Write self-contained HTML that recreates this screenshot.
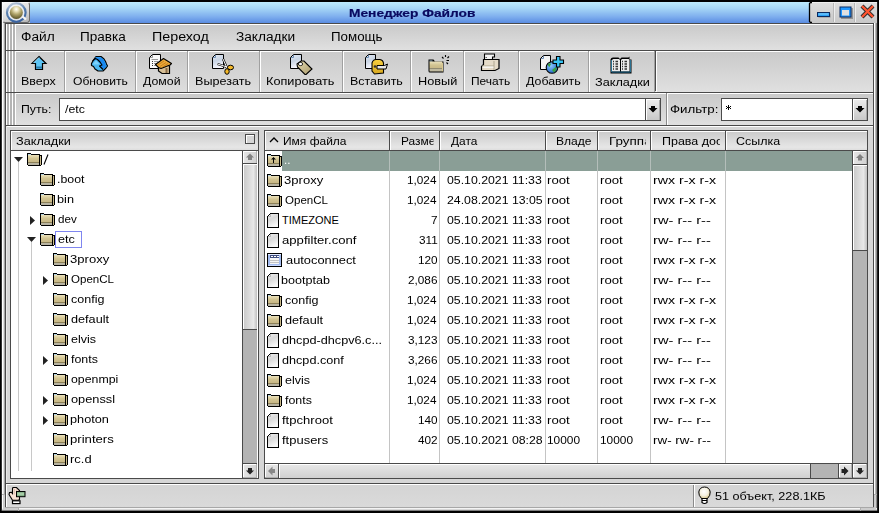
<!DOCTYPE html>
<html><head><meta charset="utf-8"><style>
html,body{margin:0;padding:0;}
body{width:879px;height:513px;overflow:hidden;background:#000;position:relative;font-family:'Liberation Sans', sans-serif;}
div{position:absolute;box-sizing:border-box;}
svg{position:absolute;}
</style></head><body>
<div style="left:2px;top:2px;width:875px;height:509px;background:#d6d6d6;"></div><div style="left:1px;top:2px;width:1px;height:509px;background:#303030;"></div><div style="left:2px;top:2px;width:1px;height:509px;background:#ffffff;"></div><div style="left:3px;top:23px;width:1px;height:488px;background:#e0e0e0;"></div><div style="left:4px;top:23px;width:1px;height:488px;background:#a4a4a4;"></div><div style="left:874px;top:23px;width:1px;height:488px;background:#ffffff;"></div><div style="left:875px;top:23px;width:1px;height:488px;background:#b8b8b8;"></div><div style="left:876px;top:2px;width:1px;height:509px;background:#8a8a8a;"></div><div style="left:877px;top:2px;width:1px;height:509px;background:#202020;"></div><div style="left:2px;top:508px;width:875px;height:1px;background:#f4f4f4;"></div><div style="left:2px;top:509px;width:875px;height:1px;background:#d8d8d8;"></div><div style="left:2px;top:510px;width:875px;height:1px;background:#808080;"></div><div style="left:874px;top:495px;width:2px;height:15px;background:#cdcdcd;"></div><div style="left:861px;top:508px;width:15px;height:2px;background:#cdcdcd;"></div><div style="left:860px;top:508px;width:1px;height:3px;background:#b0b0b0;"></div><div style="left:874px;top:494px;width:3px;height:1px;background:#b0b0b0;"></div><div style="left:3px;top:495px;width:2px;height:15px;background:#cdcdcd;"></div><div style="left:3px;top:508px;width:15px;height:2px;background:#cdcdcd;"></div><div style="left:18px;top:508px;width:1px;height:3px;background:#b0b0b0;"></div><div style="left:2px;top:494px;width:3px;height:1px;background:#b0b0b0;"></div><div style="left:30px;top:2px;width:780px;height:21px;background:linear-gradient(#bdeafc,#a6d6f6 30%,#7eaeee 70%,#5b8de2);"></div><div style="left:2px;top:2px;width:28px;height:21px;background:linear-gradient(160deg,#f6f6f6,#dcdcdc 55%,#b4b4b4);border-radius:3px;border-top:1px solid #fafafa;border-left:1px solid #fafafa;border-right:1px solid #6a6a6a;border-bottom:1px solid #6a6a6a"></div><svg style="position:absolute;left:2px;top:2px" width="28" height="21" viewBox="0 0 28 21"><defs><radialGradient id="gs" cx="0.5" cy="0.25" r="0.8"><stop offset="0" stop-color="#ffffff"/><stop offset="0.22" stop-color="#e8e0b8"/><stop offset="0.5" stop-color="#b0a46a"/><stop offset="0.85" stop-color="#6a6232"/><stop offset="1" stop-color="#4a4420"/></radialGradient>
<linearGradient id="rg" x1="0" y1="0" x2="0.3" y2="1"><stop offset="0" stop-color="#6c8cb8" stop-opacity="0.35"/><stop offset="0.5" stop-color="#4a74a8" stop-opacity="0.9"/><stop offset="1" stop-color="#3a64a0" stop-opacity="1"/></linearGradient>
<filter id="bl"><feGaussianBlur stdDeviation="0.7"/></filter></defs>
<circle cx="14.3" cy="10.5" r="9" fill="none" stroke="url(#rg)" stroke-width="2.8" filter="url(#bl)"/>
<circle cx="14.3" cy="10.5" r="7.6" fill="none" stroke="#fff" stroke-width="1.4" opacity="0.8" filter="url(#bl)"/>
<path d="M20.5 14.5 L24 17.5" stroke="#f4f4f4" stroke-width="2.2" filter="url(#bl)"/>
<circle cx="14.3" cy="10.5" r="6.5" fill="url(#gs)"/></svg><div style="left:810px;top:2px;width:67px;height:21px;background:linear-gradient(#dedede,#c8c8c8);"></div><div style="left:834px;top:3px;width:1px;height:19px;background:#eeeeee;"></div><div style="left:833px;top:3px;width:1px;height:19px;background:#b8b8b8;"></div><div style="left:855px;top:3px;width:1px;height:19px;background:#eeeeee;"></div><div style="left:854px;top:3px;width:1px;height:19px;background:#b8b8b8;"></div><div style="left:810px;top:2px;width:67px;height:1px;background:#eeeeee;"></div><svg style="position:absolute;left:806px;top:2px" width="8" height="21" viewBox="0 0 8 21"><path d="M6 0.5 H4.5 L3.5 1.5 V19.5 L4.5 20.5 H6" fill="none" stroke="#000" stroke-width="1.3"/></svg><svg style="position:absolute;left:816px;top:11px" width="17" height="9" viewBox="0 0 17 9"><rect x="2.5" y="2.5" width="12" height="4" fill="#111" opacity="0.35"/><rect x="1.5" y="1.5" width="12" height="4" fill="#2aa0f4" stroke="#0a2a60" stroke-width="1"/><rect x="2.5" y="2.5" width="10" height="1" fill="#8ad4ff"/></svg><svg style="position:absolute;left:838px;top:4px" width="17" height="17" viewBox="0 0 17 17"><rect x="3" y="4" width="12" height="11" fill="#222" opacity="0.35"/><rect x="1.5" y="2.5" width="12" height="11" fill="#0a2a60"/><rect x="2.5" y="3.5" width="10" height="9" fill="#1e96ff"/><rect x="4" y="6" width="7" height="5.5" fill="#e0e0e0"/></svg><svg style="position:absolute;left:859px;top:3px" width="17" height="17" viewBox="0 0 17 17"><path d="M3 3 L14 14 M14 3 L3 14" stroke="#000" stroke-width="4.2" opacity="0.8"/><path d="M3 3 L14 14 M14 3 L3 14" stroke="#ff5530" stroke-width="2.4"/></svg><div style="left:5px;top:23px;width:869px;height:1px;background:#4a4a4a;"></div><div style="left:6px;top:24px;width:867px;height:26px;background:linear-gradient(#c9c9c9,#e0e0e0);"></div><div style="left:6px;top:24px;width:867px;height:1px;background:#ffffff;"></div><div style="left:5px;top:23px;width:1px;height:27px;background:#4a4a4a;"></div><div style="left:873px;top:23px;width:1px;height:27px;background:#4a4a4a;"></div><div style="left:6px;top:24px;width:1px;height:26px;background:#ffffff;"></div><div style="left:7px;top:24px;width:2px;height:26px;background:#b4b4b4;"></div><div style="left:9px;top:24px;width:1px;height:26px;background:#ffffff;"></div><div style="left:10px;top:24px;width:2px;height:26px;background:#b4b4b4;"></div><div style="left:12px;top:24px;width:1px;height:26px;background:#ffffff;"></div><div style="left:13px;top:24px;width:2px;height:26px;background:#b4b4b4;"></div><div style="left:15px;top:24px;width:1px;height:26px;background:#ffffff;"></div><div style="left:5px;top:50px;width:869px;height:1px;background:#4a4a4a;"></div><div style="left:6px;top:51px;width:867px;height:41px;background:linear-gradient(#c9c9c9,#e0e0e0);"></div><div style="left:6px;top:51px;width:867px;height:1px;background:#ffffff;"></div><div style="left:5px;top:50px;width:1px;height:42px;background:#4a4a4a;"></div><div style="left:873px;top:50px;width:1px;height:42px;background:#4a4a4a;"></div><div style="left:6px;top:51px;width:1px;height:41px;background:#ffffff;"></div><div style="left:7px;top:51px;width:2px;height:41px;background:#b4b4b4;"></div><div style="left:9px;top:51px;width:1px;height:41px;background:#ffffff;"></div><div style="left:10px;top:51px;width:2px;height:41px;background:#b4b4b4;"></div><div style="left:12px;top:51px;width:1px;height:41px;background:#ffffff;"></div><div style="left:13px;top:51px;width:2px;height:41px;background:#b4b4b4;"></div><div style="left:15px;top:51px;width:1px;height:41px;background:#ffffff;"></div><div style="left:15px;top:52px;width:50px;height:40px;background:linear-gradient(#cbcbcb,#dddddd);"></div><div style="left:15px;top:52px;width:1px;height:40px;background:#ffffff;"></div><div style="left:64px;top:51px;width:1px;height:41px;background:#a0a0a0;"></div><div style="left:65px;top:52px;width:71px;height:40px;background:linear-gradient(#cbcbcb,#dddddd);"></div><div style="left:65px;top:52px;width:1px;height:40px;background:#ffffff;"></div><div style="left:135px;top:51px;width:1px;height:41px;background:#a0a0a0;"></div><div style="left:136px;top:52px;width:52px;height:40px;background:linear-gradient(#cbcbcb,#dddddd);"></div><div style="left:136px;top:52px;width:1px;height:40px;background:#ffffff;"></div><div style="left:187px;top:51px;width:1px;height:41px;background:#a0a0a0;"></div><div style="left:188px;top:52px;width:72px;height:40px;background:linear-gradient(#cbcbcb,#dddddd);"></div><div style="left:188px;top:52px;width:1px;height:40px;background:#ffffff;"></div><div style="left:259px;top:51px;width:1px;height:41px;background:#a0a0a0;"></div><div style="left:260px;top:52px;width:83px;height:40px;background:linear-gradient(#cbcbcb,#dddddd);"></div><div style="left:260px;top:52px;width:1px;height:40px;background:#ffffff;"></div><div style="left:342px;top:51px;width:1px;height:41px;background:#a0a0a0;"></div><div style="left:343px;top:52px;width:68px;height:40px;background:linear-gradient(#cbcbcb,#dddddd);"></div><div style="left:343px;top:52px;width:1px;height:40px;background:#ffffff;"></div><div style="left:410px;top:51px;width:1px;height:41px;background:#a0a0a0;"></div><div style="left:411px;top:52px;width:53px;height:40px;background:linear-gradient(#cbcbcb,#dddddd);"></div><div style="left:411px;top:52px;width:1px;height:40px;background:#ffffff;"></div><div style="left:463px;top:51px;width:1px;height:41px;background:#a0a0a0;"></div><div style="left:464px;top:52px;width:55px;height:40px;background:linear-gradient(#cbcbcb,#dddddd);"></div><div style="left:464px;top:52px;width:1px;height:40px;background:#ffffff;"></div><div style="left:518px;top:51px;width:1px;height:41px;background:#a0a0a0;"></div><div style="left:519px;top:52px;width:70px;height:40px;background:linear-gradient(#cbcbcb,#dddddd);"></div><div style="left:519px;top:52px;width:1px;height:40px;background:#ffffff;"></div><div style="left:588px;top:51px;width:1px;height:41px;background:#a0a0a0;"></div><div style="left:589px;top:52px;width:66px;height:40px;background:linear-gradient(#cbcbcb,#dddddd);"></div><div style="left:589px;top:52px;width:1px;height:40px;background:#ffffff;"></div><div style="left:654px;top:51px;width:1px;height:41px;background:#a0a0a0;"></div><div style="left:655px;top:51px;width:1px;height:40px;background:#4a4a4a;"></div><div style="left:656px;top:51px;width:1px;height:41px;background:#ffffff;"></div><svg style="position:absolute;left:0px;top:0px" width="1" height="1" viewBox="0 0 1 1"><defs><linearGradient id="docg" x1="0" y1="0" x2="0.3" y2="1"><stop offset="0" stop-color="#e8eef8"/><stop offset="0.5" stop-color="#c8d4e4"/><stop offset="1" stop-color="#f8f8ff"/></linearGradient><linearGradient id="tan" x1="0" y1="0" x2="1" y2="1"><stop offset="0" stop-color="#e6dcb2"/><stop offset="1" stop-color="#a8986a"/></linearGradient><linearGradient id="ylw" x1="0" y1="0" x2="0" y2="1"><stop offset="0" stop-color="#f8d040"/><stop offset="1" stop-color="#d8a820"/></linearGradient><radialGradient id="globe" cx="0.4" cy="0.35" r="0.7"><stop offset="0" stop-color="#8cc8ff"/><stop offset="1" stop-color="#1a60c0"/></radialGradient></defs></svg><svg style="position:absolute;left:30px;top:55px" width="18" height="17" viewBox="0 0 18 17"><path d="M9 1.5 L16 8.5 H12.5 V14.5 H5.5 V8.5 H2 Z" fill="#5cc4f4" stroke="#000" stroke-width="1.2" stroke-linejoin="miter"/><rect x="6" y="11.5" width="6" height="2" fill="#2a7aa8"/><path d="M9 2.5 L3.5 8" stroke="#a8e4ff" stroke-width="1"/></svg><svg style="position:absolute;left:90px;top:55px" width="19" height="18" viewBox="0 0 19 18"><path d="M6 1.5 H11 L14 4 L15.5 6.5 L16.5 9 L17.5 11 L16 13 L13 16 H8 L5 14 L3.5 11.5 L1.5 10.5 V8.5 L3.5 5 Z" fill="#4cb8f0" stroke="#000" stroke-width="1.2" stroke-linejoin="round"/><path d="M5.5 2.3 H10.8 L13.5 4.5 L15 7 L16 10 L16.5 11 L14.5 13.5 L12.5 14.5 L9.5 11.5 L12 10.5 L8.5 6.5 L6.5 4.5 L3.5 6 Z" fill="#1a8af0"/><path d="M2.5 6 L5.5 3.5 L7.5 4.5 L10 7 L12 10 L9.5 11 L13 14.5" fill="none" stroke="#000" stroke-width="1.1" stroke-linejoin="round"/><path d="M2.5 9.5 L6 5.5 L9.5 9 L7.5 9.5" fill="#8ad8ff" opacity="0.8"/></svg><svg style="position:absolute;left:146px;top:52px" width="28" height="24" viewBox="0 0 28 24"><path d="M6.5 2.5 H14.5 V16.5 H3.5 V5.5 Z" fill="#fafafa" stroke="#000" stroke-width="1"/><path d="M6.5 3 V5.5 H4" fill="none" stroke="#999" stroke-width="1"/><path d="M5.5 7.5 H12 M8 9.5 H12 M8 11.5 H11 M8 13.5 H10" stroke="#999" stroke-width="1"/><path d="M6 9.5 H7 M6 11.5 H7 M6 13.5 H7" stroke="#333" stroke-width="1"/><path d="M12.5 15 L19 12 L23.5 14 V21.5 H16 L12.5 19 Z" fill="#d6bf96" stroke="#000" stroke-width="1.2"/><path d="M19.5 16 H21.5 V21 H19.5 Z" fill="#8a6a44"/><path d="M9.5 12.5 L17.5 6.5 L25.5 11.5 L24 13 L15 16.5 L12.5 15.5 Z" fill="#eaa838" stroke="#000" stroke-width="1.1" stroke-linejoin="round"/><path d="M12 13 L18 9 M14 14.5 L20 10.5 M16.5 15 L22 11.5" stroke="#c07818" stroke-width="0.8"/></svg><svg style="position:absolute;left:210px;top:53px" width="26" height="22" viewBox="0 0 26 22"><path d="M5.5 1.5 H13.5 V15.5 H2.5 V4.5 Z" fill="url(#docg)" stroke="#000" stroke-width="1"/><path d="M5.5 2.0 V4.5 H3.0" fill="none" stroke="#6a8ab0" stroke-width="1"/><path d="M13 6 L17 15 M7.5 11 L17 14" stroke="#000" stroke-width="2.2"/><path d="M13 6 L17 15 M7.5 11 L17 14" stroke="#fff" stroke-width="1"/><ellipse cx="20.5" cy="14.5" rx="3" ry="2.3" fill="#f4b828" stroke="#000" stroke-width="1"/><ellipse cx="17" cy="18.5" rx="2.2" ry="2.8" fill="#f4b828" stroke="#000" stroke-width="1"/></svg><svg style="position:absolute;left:288px;top:53px" width="26" height="22" viewBox="0 0 26 22"><path d="M5.5 1.5 H13.5 V15.5 H2.5 V4.5 Z" fill="url(#docg)" stroke="#000" stroke-width="1"/><path d="M5.5 2.0 V4.5 H3.0" fill="none" stroke="#6a8ab0" stroke-width="1"/><path d="M9 11 L13 8 L16 8 L24 16 L17.5 22 L9.5 14 Z" fill="url(#tan)" stroke="#000" stroke-width="1.1"/><ellipse cx="12.5" cy="11" rx="2.2" ry="1.6" fill="#fff" stroke="#000" stroke-width="0.8"/></svg><svg style="position:absolute;left:362px;top:53px" width="26" height="22" viewBox="0 0 26 22"><path d="M6.5 1.5 H13.5 V15.5 H3.5 V4.5 Z" fill="url(#docg)" stroke="#000" stroke-width="1"/><path d="M6.5 2.0 V4.5 H4.0" fill="none" stroke="#6a8ab0" stroke-width="1"/><path d="M10 10 Q11 6.5 14 6.5 H18 Q21 7 21.5 10 V20 L12.5 21 L10 18 Z" fill="url(#ylw)" stroke="#000" stroke-width="1.1"/><path d="M15 12.5 H22.5 L25.5 11 L24 16 H15 Z" fill="#e8e8e8" stroke="#000" stroke-width="1"/><circle cx="13" cy="13.5" r="1.3" fill="#333"/></svg><svg style="position:absolute;left:426px;top:54px" width="24" height="20" viewBox="0 0 24 20"><path d="M2.5 5.5 V17 Q2.5 18.5 4 18.5 H17.5 V7.5 H9 L7.5 5.5 Z" fill="#000"/><rect x="3.5" y="6.5" width="3" height="1" fill="#a8c8d8"/><rect x="3.5" y="7.5" width="12.5" height="7" fill="url(#fg)"/><rect x="3.5" y="14.5" width="12.5" height="3" fill="#c0baa0"/><rect x="16" y="8.5" width="1" height="9" fill="#d8c890"/><path d="M16 3 L17.5 4.5 M19.5 1 V3 M23 2.5 L21.5 4 M20.5 6.5 H23 M20.5 8.5 L22 10" stroke="#000" stroke-width="1.1"/></svg><svg style="position:absolute;left:479px;top:53px" width="24" height="21" viewBox="0 0 24 21"><path d="M5.5 1 H15.5 V4 H13.5 V7 H5.5 Z" fill="#f4f4f4" stroke="#000" stroke-width="1.1"/><path d="M6.5 4.5 H8 M6.5 6.5 H11" stroke="#555" stroke-width="0.9"/><path d="M4.5 6.5 H20 V15.5 L16 17.5 H2.5 V13.5 L4.5 11.5 Z" fill="#e6dcc8" stroke="#000" stroke-width="1.2"/><path d="M3 13 H15 M15 8 V17" stroke="#b0a890" stroke-width="1"/><rect x="3.5" y="13.5" width="11" height="1.2" fill="#fff"/></svg><svg style="position:absolute;left:538px;top:53px" width="28" height="22" viewBox="0 0 28 22"><path d="M5.5 2.5 H12.5 V16.5 H2.5 V5.5 Z" fill="#f4f4f4" stroke="#000" stroke-width="1"/><path d="M5.5 3.0 V5.5 H3.0" fill="none" stroke="#6a8ab0" stroke-width="1"/><circle cx="14" cy="14.5" r="5.8" fill="url(#globe)" stroke="#000" stroke-width="1.1"/><path d="M10 11 Q12 9.5 13 11 L11.5 14 Q9.5 13 10 11 Z M14 17 L18.5 13.5 Q19 17 16 19.5 Z" fill="#3aa040"/><path d="M18.5 3.5 H22 V7 H25.5 V10.5 H22 V14 H18.5 V10.5 H15 V7 H18.5 Z" fill="#38c4f4" stroke="#000" stroke-width="1.1"/></svg><svg style="position:absolute;left:609px;top:55px" width="24" height="20" viewBox="0 0 24 20"><path d="M1.5 4.5 Q2 2.5 4 2.5 H9.5 L11 4 L12.5 2.5 H19.5 L20.5 1.5 V4.5 H22.5 V18.5 H1.5 Z" fill="#000"/><path d="M3 5.5 Q3 4 4.5 4 H10 L11 5 V16.5 H3 Z M12 5 L13 4 H19.5 Q20.5 4 20.5 5.5 V16.5 H12 Z" fill="#ececec"/><rect x="2.5" y="16.5" width="19" height="1.2" fill="#1a5a7a"/><rect x="2" y="5" width="1" height="12" fill="#2a7090"/><rect x="21" y="5" width="1" height="12" fill="#2a7090"/><path d="M4 6.5 H5 M6.5 6.5 H9 M4 9 H5 M6.5 9 H9 M4 11.5 H5 M6.5 11.5 H9 M4 14 H5 M6.5 14 H9 M13 6.5 H14 M15.5 6.5 H18 M13 9 H14 M15.5 9 H18 M13 11.5 H14 M15.5 11.5 H18 M13 14 H14 M15.5 14 H18" stroke="#333" stroke-width="1.4"/></svg><div style="left:5px;top:92px;width:869px;height:1px;background:#4a4a4a;"></div><div style="left:6px;top:93px;width:867px;height:32px;background:linear-gradient(#c9c9c9,#e0e0e0);"></div><div style="left:6px;top:93px;width:867px;height:1px;background:#ffffff;"></div><div style="left:5px;top:92px;width:1px;height:33px;background:#4a4a4a;"></div><div style="left:873px;top:92px;width:1px;height:33px;background:#4a4a4a;"></div><div style="left:6px;top:93px;width:1px;height:32px;background:#ffffff;"></div><div style="left:7px;top:93px;width:2px;height:32px;background:#b4b4b4;"></div><div style="left:9px;top:93px;width:1px;height:32px;background:#ffffff;"></div><div style="left:10px;top:93px;width:2px;height:32px;background:#b4b4b4;"></div><div style="left:12px;top:93px;width:1px;height:32px;background:#ffffff;"></div><div style="left:13px;top:93px;width:2px;height:32px;background:#b4b4b4;"></div><div style="left:15px;top:93px;width:1px;height:32px;background:#ffffff;"></div><div style="left:666px;top:93px;width:1px;height:32px;background:#8a8a8a;"></div><div style="left:667px;top:93px;width:1px;height:32px;background:#ffffff;"></div><div style="left:6px;top:93px;width:1px;height:32px;background:#ffffff;"></div><div style="left:7px;top:93px;width:2px;height:32px;background:#b4b4b4;"></div><div style="left:9px;top:93px;width:1px;height:32px;background:#ffffff;"></div><div style="left:10px;top:93px;width:2px;height:32px;background:#b4b4b4;"></div><div style="left:12px;top:93px;width:1px;height:32px;background:#ffffff;"></div><div style="left:13px;top:93px;width:2px;height:32px;background:#b4b4b4;"></div><div style="left:15px;top:93px;width:1px;height:32px;background:#ffffff;"></div><div style="left:59px;top:98px;width:602px;height:23px;background:#ffffff;border:1px solid #4a4a4a"></div><div style="left:645px;top:99px;width:1px;height:21px;background:#4a4a4a;"></div><div style="left:646px;top:99px;width:14px;height:21px;background:linear-gradient(#ececec,#c8c8c8);"></div><div style="left:646px;top:99px;width:1px;height:21px;background:#ffffff;"></div><div style="left:646px;top:99px;width:14px;height:1px;background:#ffffff;"></div><div style="left:659px;top:100px;width:1px;height:20px;background:#a8a8a8;"></div><svg style="position:absolute;left:646px;top:99px" width="14" height="21" viewBox="0 0 14 21"><path d="M5 7 H9 V9 H11.5 L7 13.5 L2.5 9 H5 Z" fill="#000"/></svg><div style="left:721px;top:98px;width:147px;height:23px;background:#ffffff;border:1px solid #4a4a4a"></div><div style="left:852px;top:99px;width:1px;height:21px;background:#4a4a4a;"></div><div style="left:853px;top:99px;width:14px;height:21px;background:linear-gradient(#ececec,#c8c8c8);"></div><div style="left:853px;top:99px;width:1px;height:21px;background:#ffffff;"></div><div style="left:853px;top:99px;width:14px;height:1px;background:#ffffff;"></div><div style="left:866px;top:100px;width:1px;height:20px;background:#a8a8a8;"></div><svg style="position:absolute;left:853px;top:99px" width="14" height="21" viewBox="0 0 14 21"><path d="M5 7 H9 V9 H11.5 L7 13.5 L2.5 9 H5 Z" fill="#000"/></svg><svg style="position:absolute;left:725px;top:104px" width="8" height="8" viewBox="0 0 8 8"><g shape-rendering="crispEdges" fill="#000"><rect x="3" y="1" width="1" height="5"/><rect x="1" y="2" width="1" height="1"/><rect x="5" y="2" width="1" height="1"/><rect x="2" y="3" width="3" height="1"/><rect x="1" y="4" width="1" height="1"/><rect x="5" y="4" width="1" height="1"/></g></svg><div style="left:5px;top:125px;width:869px;height:1px;background:#4a4a4a;"></div><div style="left:6px;top:126px;width:867px;height:1px;background:#ffffff;"></div><div style="left:5px;top:125px;width:1px;height:359px;background:#4a4a4a;"></div><div style="left:6px;top:126px;width:1px;height:358px;background:#e8e8e8;"></div><div style="left:873px;top:125px;width:1px;height:359px;background:#4a4a4a;"></div><div style="left:7px;top:127px;width:866px;height:356px;background:#d6d6d6;"></div><div style="left:10px;top:130px;width:249px;height:349px;background:#ffffff;border:1px solid #4a4a4a"></div><div style="left:11px;top:131px;width:247px;height:19px;background:linear-gradient(#cacaca,#e6e6e6 85%,#dedede);"></div><div style="left:11px;top:131px;width:247px;height:1px;background:#ffffff;"></div><div style="left:11px;top:131px;width:1px;height:19px;background:#ffffff;"></div><div style="left:11px;top:150px;width:247px;height:1px;background:#4a4a4a;"></div><div style="left:245px;top:134px;width:10px;height:10px;background:#d6d6d6;border:1px solid #4a4a4a;box-shadow:inset 1px 1px 0 #fff"></div><div style="left:242px;top:151px;width:1px;height:327px;background:#4a4a4a;"></div><div style="left:243px;top:151px;width:14px;height:327px;background:#b4b4b4;"></div><div style="left:257px;top:151px;width:1px;height:327px;background:#ffffff;"></div><div style="left:243px;top:151px;width:14px;height:12px;background:linear-gradient(90deg,#e6e6e6,#d0d0d0);"></div><div style="left:243px;top:151px;width:1px;height:12px;background:#ffffff;"></div><div style="left:243px;top:151px;width:14px;height:1px;background:#ffffff;"></div><div style="left:256px;top:151px;width:1px;height:12px;background:#b0b0b0;"></div><svg style="position:absolute;left:243px;top:151px" width="14" height="12" viewBox="0 0 14 12"><path d="M3.0 6.5 L7.0 2.5 L11.0 6.5 H9.0 V9.0 H5.0 V6.5 Z" fill="#808080"/></svg><div style="left:242px;top:163px;width:15px;height:1px;background:#4a4a4a;"></div><div style="left:243px;top:164px;width:14px;height:166px;background:linear-gradient(90deg,#c8c8c8,#e8e8e8 75%,#c0c0c0);"></div><div style="left:243px;top:164px;width:1px;height:166px;background:#ffffff;"></div><div style="left:243px;top:164px;width:14px;height:1px;background:#ffffff;"></div><div style="left:243px;top:329px;width:14px;height:1px;background:#4a4a4a;"></div><div style="left:242px;top:463px;width:15px;height:1px;background:#4a4a4a;"></div><div style="left:243px;top:464px;width:14px;height:14px;background:linear-gradient(90deg,#e6e6e6,#d0d0d0);"></div><div style="left:243px;top:464px;width:1px;height:14px;background:#ffffff;"></div><div style="left:243px;top:464px;width:14px;height:1px;background:#ffffff;"></div><div style="left:256px;top:464px;width:1px;height:14px;background:#b0b0b0;"></div><div style="left:243px;top:477px;width:14px;height:1px;background:#b0b0b0;"></div><svg style="position:absolute;left:243px;top:464px" width="14" height="14" viewBox="0 0 14 14"><path d="M3.0 6.5 L7.0 10.5 L11.0 6.5 H9.0 V4.0 H5.0 V6.5 Z" fill="#222"/></svg><svg style="position:absolute;left:0px;top:0px" width="1" height="1" viewBox="0 0 1 1"><defs><linearGradient id="fg" x1="0" y1="0" x2="0" y2="1"><stop offset="0" stop-color="#ece2bc"/><stop offset="0.5" stop-color="#d2c492"/><stop offset="1" stop-color="#c8b886"/></linearGradient></defs></svg><div style="left:18px;top:162px;width:1px;height:309px;background:#c8c8c8;"></div><div style="left:31px;top:242px;width:1px;height:229px;background:#c8c8c8;"></div><svg style="position:absolute;left:27px;top:153px" width="15" height="13" viewBox="0 0 15 13"><g shape-rendering="crispEdges">
<rect x="0" y="0" width="4" height="1" fill="#000"/>
<rect x="0" y="0" width="1" height="12" fill="#000"/>
<rect x="4" y="1" width="9" height="1" fill="#000"/>
<rect x="12" y="1" width="1" height="12" fill="#000"/>
<rect x="13" y="2" width="2" height="1" fill="#000"/>
<rect x="14" y="2" width="1" height="10" fill="#000"/>
<rect x="1" y="12" width="13" height="1" fill="#000"/>
<rect x="1" y="1" width="3" height="1" fill="#b4d4e4"/>
<rect x="1" y="2" width="11" height="7" fill="url(#fg)"/>
<rect x="1" y="9" width="11" height="1" fill="#8c8058"/>
<rect x="1" y="10" width="11" height="2" fill="#b8b4a2"/>
<rect x="13" y="3" width="1" height="9" fill="#cdbd8c"/>
</g></svg><svg style="position:absolute;left:43px;top:154px" width="6" height="11" viewBox="0 0 6 11"><path d="M5 0.5 L1 10.5" stroke="#000" stroke-width="1.1"/></svg><svg style="position:absolute;left:14px;top:157px" width="10" height="6" viewBox="0 0 10 6"><path d="M0 0 H9 L4.5 5 Z" fill="#222"/></svg><svg style="position:absolute;left:40px;top:173px" width="15" height="13" viewBox="0 0 15 13"><g shape-rendering="crispEdges">
<rect x="0" y="0" width="4" height="1" fill="#000"/>
<rect x="0" y="0" width="1" height="12" fill="#000"/>
<rect x="4" y="1" width="9" height="1" fill="#000"/>
<rect x="12" y="1" width="1" height="12" fill="#000"/>
<rect x="13" y="2" width="2" height="1" fill="#000"/>
<rect x="14" y="2" width="1" height="10" fill="#000"/>
<rect x="1" y="12" width="13" height="1" fill="#000"/>
<rect x="1" y="1" width="3" height="1" fill="#b4d4e4"/>
<rect x="1" y="2" width="11" height="7" fill="url(#fg)"/>
<rect x="1" y="9" width="11" height="1" fill="#8c8058"/>
<rect x="1" y="10" width="11" height="2" fill="#b8b4a2"/>
<rect x="13" y="3" width="1" height="9" fill="#cdbd8c"/>
</g></svg><svg style="position:absolute;left:40px;top:193px" width="15" height="13" viewBox="0 0 15 13"><g shape-rendering="crispEdges">
<rect x="0" y="0" width="4" height="1" fill="#000"/>
<rect x="0" y="0" width="1" height="12" fill="#000"/>
<rect x="4" y="1" width="9" height="1" fill="#000"/>
<rect x="12" y="1" width="1" height="12" fill="#000"/>
<rect x="13" y="2" width="2" height="1" fill="#000"/>
<rect x="14" y="2" width="1" height="10" fill="#000"/>
<rect x="1" y="12" width="13" height="1" fill="#000"/>
<rect x="1" y="1" width="3" height="1" fill="#b4d4e4"/>
<rect x="1" y="2" width="11" height="7" fill="url(#fg)"/>
<rect x="1" y="9" width="11" height="1" fill="#8c8058"/>
<rect x="1" y="10" width="11" height="2" fill="#b8b4a2"/>
<rect x="13" y="3" width="1" height="9" fill="#cdbd8c"/>
</g></svg><svg style="position:absolute;left:40px;top:213px" width="15" height="13" viewBox="0 0 15 13"><g shape-rendering="crispEdges">
<rect x="0" y="0" width="4" height="1" fill="#000"/>
<rect x="0" y="0" width="1" height="12" fill="#000"/>
<rect x="4" y="1" width="9" height="1" fill="#000"/>
<rect x="12" y="1" width="1" height="12" fill="#000"/>
<rect x="13" y="2" width="2" height="1" fill="#000"/>
<rect x="14" y="2" width="1" height="10" fill="#000"/>
<rect x="1" y="12" width="13" height="1" fill="#000"/>
<rect x="1" y="1" width="3" height="1" fill="#b4d4e4"/>
<rect x="1" y="2" width="11" height="7" fill="url(#fg)"/>
<rect x="1" y="9" width="11" height="1" fill="#8c8058"/>
<rect x="1" y="10" width="11" height="2" fill="#b8b4a2"/>
<rect x="13" y="3" width="1" height="9" fill="#cdbd8c"/>
</g></svg><svg style="position:absolute;left:30px;top:216px" width="6" height="10" viewBox="0 0 6 10"><path d="M0 0 V9 L5 4.5 Z" fill="#222"/></svg><svg style="position:absolute;left:40px;top:233px" width="15" height="13" viewBox="0 0 15 13"><g shape-rendering="crispEdges">
<rect x="0" y="0" width="4" height="1" fill="#000"/>
<rect x="0" y="0" width="1" height="12" fill="#000"/>
<rect x="4" y="1" width="9" height="1" fill="#000"/>
<rect x="12" y="1" width="1" height="12" fill="#000"/>
<rect x="13" y="2" width="2" height="1" fill="#000"/>
<rect x="14" y="2" width="1" height="10" fill="#000"/>
<rect x="1" y="12" width="13" height="1" fill="#000"/>
<rect x="1" y="1" width="3" height="1" fill="#b4d4e4"/>
<rect x="1" y="2" width="11" height="7" fill="url(#fg)"/>
<rect x="1" y="9" width="11" height="1" fill="#8c8058"/>
<rect x="1" y="10" width="11" height="2" fill="#b8b4a2"/>
<rect x="13" y="3" width="1" height="9" fill="#cdbd8c"/>
</g></svg><svg style="position:absolute;left:27px;top:237px" width="10" height="6" viewBox="0 0 10 6"><path d="M0 0 H9 L4.5 5 Z" fill="#222"/></svg><svg style="position:absolute;left:53px;top:253px" width="15" height="13" viewBox="0 0 15 13"><g shape-rendering="crispEdges">
<rect x="0" y="0" width="4" height="1" fill="#000"/>
<rect x="0" y="0" width="1" height="12" fill="#000"/>
<rect x="4" y="1" width="9" height="1" fill="#000"/>
<rect x="12" y="1" width="1" height="12" fill="#000"/>
<rect x="13" y="2" width="2" height="1" fill="#000"/>
<rect x="14" y="2" width="1" height="10" fill="#000"/>
<rect x="1" y="12" width="13" height="1" fill="#000"/>
<rect x="1" y="1" width="3" height="1" fill="#b4d4e4"/>
<rect x="1" y="2" width="11" height="7" fill="url(#fg)"/>
<rect x="1" y="9" width="11" height="1" fill="#8c8058"/>
<rect x="1" y="10" width="11" height="2" fill="#b8b4a2"/>
<rect x="13" y="3" width="1" height="9" fill="#cdbd8c"/>
</g></svg><svg style="position:absolute;left:53px;top:273px" width="15" height="13" viewBox="0 0 15 13"><g shape-rendering="crispEdges">
<rect x="0" y="0" width="4" height="1" fill="#000"/>
<rect x="0" y="0" width="1" height="12" fill="#000"/>
<rect x="4" y="1" width="9" height="1" fill="#000"/>
<rect x="12" y="1" width="1" height="12" fill="#000"/>
<rect x="13" y="2" width="2" height="1" fill="#000"/>
<rect x="14" y="2" width="1" height="10" fill="#000"/>
<rect x="1" y="12" width="13" height="1" fill="#000"/>
<rect x="1" y="1" width="3" height="1" fill="#b4d4e4"/>
<rect x="1" y="2" width="11" height="7" fill="url(#fg)"/>
<rect x="1" y="9" width="11" height="1" fill="#8c8058"/>
<rect x="1" y="10" width="11" height="2" fill="#b8b4a2"/>
<rect x="13" y="3" width="1" height="9" fill="#cdbd8c"/>
</g></svg><svg style="position:absolute;left:43px;top:276px" width="6" height="10" viewBox="0 0 6 10"><path d="M0 0 V9 L5 4.5 Z" fill="#222"/></svg><svg style="position:absolute;left:53px;top:293px" width="15" height="13" viewBox="0 0 15 13"><g shape-rendering="crispEdges">
<rect x="0" y="0" width="4" height="1" fill="#000"/>
<rect x="0" y="0" width="1" height="12" fill="#000"/>
<rect x="4" y="1" width="9" height="1" fill="#000"/>
<rect x="12" y="1" width="1" height="12" fill="#000"/>
<rect x="13" y="2" width="2" height="1" fill="#000"/>
<rect x="14" y="2" width="1" height="10" fill="#000"/>
<rect x="1" y="12" width="13" height="1" fill="#000"/>
<rect x="1" y="1" width="3" height="1" fill="#b4d4e4"/>
<rect x="1" y="2" width="11" height="7" fill="url(#fg)"/>
<rect x="1" y="9" width="11" height="1" fill="#8c8058"/>
<rect x="1" y="10" width="11" height="2" fill="#b8b4a2"/>
<rect x="13" y="3" width="1" height="9" fill="#cdbd8c"/>
</g></svg><svg style="position:absolute;left:53px;top:313px" width="15" height="13" viewBox="0 0 15 13"><g shape-rendering="crispEdges">
<rect x="0" y="0" width="4" height="1" fill="#000"/>
<rect x="0" y="0" width="1" height="12" fill="#000"/>
<rect x="4" y="1" width="9" height="1" fill="#000"/>
<rect x="12" y="1" width="1" height="12" fill="#000"/>
<rect x="13" y="2" width="2" height="1" fill="#000"/>
<rect x="14" y="2" width="1" height="10" fill="#000"/>
<rect x="1" y="12" width="13" height="1" fill="#000"/>
<rect x="1" y="1" width="3" height="1" fill="#b4d4e4"/>
<rect x="1" y="2" width="11" height="7" fill="url(#fg)"/>
<rect x="1" y="9" width="11" height="1" fill="#8c8058"/>
<rect x="1" y="10" width="11" height="2" fill="#b8b4a2"/>
<rect x="13" y="3" width="1" height="9" fill="#cdbd8c"/>
</g></svg><svg style="position:absolute;left:53px;top:333px" width="15" height="13" viewBox="0 0 15 13"><g shape-rendering="crispEdges">
<rect x="0" y="0" width="4" height="1" fill="#000"/>
<rect x="0" y="0" width="1" height="12" fill="#000"/>
<rect x="4" y="1" width="9" height="1" fill="#000"/>
<rect x="12" y="1" width="1" height="12" fill="#000"/>
<rect x="13" y="2" width="2" height="1" fill="#000"/>
<rect x="14" y="2" width="1" height="10" fill="#000"/>
<rect x="1" y="12" width="13" height="1" fill="#000"/>
<rect x="1" y="1" width="3" height="1" fill="#b4d4e4"/>
<rect x="1" y="2" width="11" height="7" fill="url(#fg)"/>
<rect x="1" y="9" width="11" height="1" fill="#8c8058"/>
<rect x="1" y="10" width="11" height="2" fill="#b8b4a2"/>
<rect x="13" y="3" width="1" height="9" fill="#cdbd8c"/>
</g></svg><svg style="position:absolute;left:53px;top:353px" width="15" height="13" viewBox="0 0 15 13"><g shape-rendering="crispEdges">
<rect x="0" y="0" width="4" height="1" fill="#000"/>
<rect x="0" y="0" width="1" height="12" fill="#000"/>
<rect x="4" y="1" width="9" height="1" fill="#000"/>
<rect x="12" y="1" width="1" height="12" fill="#000"/>
<rect x="13" y="2" width="2" height="1" fill="#000"/>
<rect x="14" y="2" width="1" height="10" fill="#000"/>
<rect x="1" y="12" width="13" height="1" fill="#000"/>
<rect x="1" y="1" width="3" height="1" fill="#b4d4e4"/>
<rect x="1" y="2" width="11" height="7" fill="url(#fg)"/>
<rect x="1" y="9" width="11" height="1" fill="#8c8058"/>
<rect x="1" y="10" width="11" height="2" fill="#b8b4a2"/>
<rect x="13" y="3" width="1" height="9" fill="#cdbd8c"/>
</g></svg><svg style="position:absolute;left:43px;top:356px" width="6" height="10" viewBox="0 0 6 10"><path d="M0 0 V9 L5 4.5 Z" fill="#222"/></svg><svg style="position:absolute;left:53px;top:373px" width="15" height="13" viewBox="0 0 15 13"><g shape-rendering="crispEdges">
<rect x="0" y="0" width="4" height="1" fill="#000"/>
<rect x="0" y="0" width="1" height="12" fill="#000"/>
<rect x="4" y="1" width="9" height="1" fill="#000"/>
<rect x="12" y="1" width="1" height="12" fill="#000"/>
<rect x="13" y="2" width="2" height="1" fill="#000"/>
<rect x="14" y="2" width="1" height="10" fill="#000"/>
<rect x="1" y="12" width="13" height="1" fill="#000"/>
<rect x="1" y="1" width="3" height="1" fill="#b4d4e4"/>
<rect x="1" y="2" width="11" height="7" fill="url(#fg)"/>
<rect x="1" y="9" width="11" height="1" fill="#8c8058"/>
<rect x="1" y="10" width="11" height="2" fill="#b8b4a2"/>
<rect x="13" y="3" width="1" height="9" fill="#cdbd8c"/>
</g></svg><svg style="position:absolute;left:53px;top:393px" width="15" height="13" viewBox="0 0 15 13"><g shape-rendering="crispEdges">
<rect x="0" y="0" width="4" height="1" fill="#000"/>
<rect x="0" y="0" width="1" height="12" fill="#000"/>
<rect x="4" y="1" width="9" height="1" fill="#000"/>
<rect x="12" y="1" width="1" height="12" fill="#000"/>
<rect x="13" y="2" width="2" height="1" fill="#000"/>
<rect x="14" y="2" width="1" height="10" fill="#000"/>
<rect x="1" y="12" width="13" height="1" fill="#000"/>
<rect x="1" y="1" width="3" height="1" fill="#b4d4e4"/>
<rect x="1" y="2" width="11" height="7" fill="url(#fg)"/>
<rect x="1" y="9" width="11" height="1" fill="#8c8058"/>
<rect x="1" y="10" width="11" height="2" fill="#b8b4a2"/>
<rect x="13" y="3" width="1" height="9" fill="#cdbd8c"/>
</g></svg><svg style="position:absolute;left:43px;top:396px" width="6" height="10" viewBox="0 0 6 10"><path d="M0 0 V9 L5 4.5 Z" fill="#222"/></svg><svg style="position:absolute;left:53px;top:413px" width="15" height="13" viewBox="0 0 15 13"><g shape-rendering="crispEdges">
<rect x="0" y="0" width="4" height="1" fill="#000"/>
<rect x="0" y="0" width="1" height="12" fill="#000"/>
<rect x="4" y="1" width="9" height="1" fill="#000"/>
<rect x="12" y="1" width="1" height="12" fill="#000"/>
<rect x="13" y="2" width="2" height="1" fill="#000"/>
<rect x="14" y="2" width="1" height="10" fill="#000"/>
<rect x="1" y="12" width="13" height="1" fill="#000"/>
<rect x="1" y="1" width="3" height="1" fill="#b4d4e4"/>
<rect x="1" y="2" width="11" height="7" fill="url(#fg)"/>
<rect x="1" y="9" width="11" height="1" fill="#8c8058"/>
<rect x="1" y="10" width="11" height="2" fill="#b8b4a2"/>
<rect x="13" y="3" width="1" height="9" fill="#cdbd8c"/>
</g></svg><svg style="position:absolute;left:43px;top:416px" width="6" height="10" viewBox="0 0 6 10"><path d="M0 0 V9 L5 4.5 Z" fill="#222"/></svg><svg style="position:absolute;left:53px;top:433px" width="15" height="13" viewBox="0 0 15 13"><g shape-rendering="crispEdges">
<rect x="0" y="0" width="4" height="1" fill="#000"/>
<rect x="0" y="0" width="1" height="12" fill="#000"/>
<rect x="4" y="1" width="9" height="1" fill="#000"/>
<rect x="12" y="1" width="1" height="12" fill="#000"/>
<rect x="13" y="2" width="2" height="1" fill="#000"/>
<rect x="14" y="2" width="1" height="10" fill="#000"/>
<rect x="1" y="12" width="13" height="1" fill="#000"/>
<rect x="1" y="1" width="3" height="1" fill="#b4d4e4"/>
<rect x="1" y="2" width="11" height="7" fill="url(#fg)"/>
<rect x="1" y="9" width="11" height="1" fill="#8c8058"/>
<rect x="1" y="10" width="11" height="2" fill="#b8b4a2"/>
<rect x="13" y="3" width="1" height="9" fill="#cdbd8c"/>
</g></svg><svg style="position:absolute;left:53px;top:453px" width="15" height="13" viewBox="0 0 15 13"><g shape-rendering="crispEdges">
<rect x="0" y="0" width="4" height="1" fill="#000"/>
<rect x="0" y="0" width="1" height="12" fill="#000"/>
<rect x="4" y="1" width="9" height="1" fill="#000"/>
<rect x="12" y="1" width="1" height="12" fill="#000"/>
<rect x="13" y="2" width="2" height="1" fill="#000"/>
<rect x="14" y="2" width="1" height="10" fill="#000"/>
<rect x="1" y="12" width="13" height="1" fill="#000"/>
<rect x="1" y="1" width="3" height="1" fill="#b4d4e4"/>
<rect x="1" y="2" width="11" height="7" fill="url(#fg)"/>
<rect x="1" y="9" width="11" height="1" fill="#8c8058"/>
<rect x="1" y="10" width="11" height="2" fill="#b8b4a2"/>
<rect x="13" y="3" width="1" height="9" fill="#cdbd8c"/>
</g></svg><div style="left:55px;top:231px;width:27px;height:17px;background:transparent;border:1px solid #7f86f0"></div><div style="left:264px;top:130px;width:604px;height:349px;background:#ffffff;border:1px solid #4a4a4a"></div><div style="left:265px;top:131px;width:602px;height:19px;background:linear-gradient(#cacaca,#e6e6e6 85%,#dedede);"></div><div style="left:265px;top:131px;width:602px;height:1px;background:#ffffff;"></div><div style="left:265px;top:150px;width:602px;height:1px;background:#4a4a4a;"></div><div style="left:389px;top:131px;width:1px;height:19px;background:#4a4a4a;"></div><div style="left:390px;top:132px;width:1px;height:18px;background:#ffffff;"></div><div style="left:439px;top:131px;width:1px;height:19px;background:#4a4a4a;"></div><div style="left:440px;top:132px;width:1px;height:18px;background:#ffffff;"></div><div style="left:545px;top:131px;width:1px;height:19px;background:#4a4a4a;"></div><div style="left:546px;top:132px;width:1px;height:18px;background:#ffffff;"></div><div style="left:597px;top:131px;width:1px;height:19px;background:#4a4a4a;"></div><div style="left:598px;top:132px;width:1px;height:18px;background:#ffffff;"></div><div style="left:650px;top:131px;width:1px;height:19px;background:#4a4a4a;"></div><div style="left:651px;top:132px;width:1px;height:18px;background:#ffffff;"></div><div style="left:725px;top:131px;width:1px;height:19px;background:#4a4a4a;"></div><div style="left:726px;top:132px;width:1px;height:18px;background:#ffffff;"></div><div style="left:265px;top:131px;width:1px;height:19px;background:#ffffff;"></div><svg style="position:absolute;left:269px;top:136px" width="10" height="7" viewBox="0 0 10 7"><path d="M1 6 L5 2 L9 6" fill="none" stroke="#000" stroke-width="1.3"/></svg><div style="left:389px;top:151px;width:1px;height:312px;background:#c4c4c4;"></div><div style="left:439px;top:151px;width:1px;height:312px;background:#c4c4c4;"></div><div style="left:545px;top:151px;width:1px;height:312px;background:#c4c4c4;"></div><div style="left:597px;top:151px;width:1px;height:312px;background:#c4c4c4;"></div><div style="left:650px;top:151px;width:1px;height:312px;background:#c4c4c4;"></div><div style="left:725px;top:151px;width:1px;height:312px;background:#c4c4c4;"></div><div style="left:282px;top:151px;width:570px;height:20px;background:#8a9e96;"></div><div style="left:389px;top:151px;width:1px;height:20px;background:#b4beba;"></div><div style="left:439px;top:151px;width:1px;height:20px;background:#b4beba;"></div><div style="left:545px;top:151px;width:1px;height:20px;background:#b4beba;"></div><div style="left:597px;top:151px;width:1px;height:20px;background:#b4beba;"></div><div style="left:650px;top:151px;width:1px;height:20px;background:#b4beba;"></div><div style="left:725px;top:151px;width:1px;height:20px;background:#b4beba;"></div><svg style="position:absolute;left:0px;top:0px" width="1" height="1" viewBox="0 0 1 1"><defs><linearGradient id="fl" x1="0" y1="0" x2="0.4" y2="1"><stop offset="0" stop-color="#f0f0f0"/><stop offset="0.45" stop-color="#d8d8d8"/><stop offset="1" stop-color="#f8f8f8"/></linearGradient></defs></svg><svg style="position:absolute;left:267px;top:154px" width="15" height="13" viewBox="0 0 15 13"><g shape-rendering="crispEdges">
<rect x="0" y="0" width="4" height="1" fill="#000"/>
<rect x="0" y="0" width="1" height="12" fill="#000"/>
<rect x="4" y="1" width="9" height="1" fill="#000"/>
<rect x="12" y="1" width="1" height="12" fill="#000"/>
<rect x="13" y="2" width="2" height="1" fill="#000"/>
<rect x="14" y="2" width="1" height="10" fill="#000"/>
<rect x="1" y="12" width="13" height="1" fill="#000"/>
<rect x="1" y="1" width="3" height="1" fill="#b4d4e4"/>
<rect x="1" y="2" width="11" height="7" fill="url(#fg)"/>
<rect x="1" y="9" width="11" height="1" fill="#8c8058"/>
<rect x="1" y="10" width="11" height="2" fill="#b8b4a2"/>
<rect x="13" y="3" width="1" height="9" fill="#cdbd8c"/>
</g><path d="M6.5 3 L4 5.5 H6 V9 H7 V5.5 H9 Z" fill="#000"/></svg><svg style="position:absolute;left:267px;top:174px" width="15" height="13" viewBox="0 0 15 13"><g shape-rendering="crispEdges">
<rect x="0" y="0" width="4" height="1" fill="#000"/>
<rect x="0" y="0" width="1" height="12" fill="#000"/>
<rect x="4" y="1" width="9" height="1" fill="#000"/>
<rect x="12" y="1" width="1" height="12" fill="#000"/>
<rect x="13" y="2" width="2" height="1" fill="#000"/>
<rect x="14" y="2" width="1" height="10" fill="#000"/>
<rect x="1" y="12" width="13" height="1" fill="#000"/>
<rect x="1" y="1" width="3" height="1" fill="#b4d4e4"/>
<rect x="1" y="2" width="11" height="7" fill="url(#fg)"/>
<rect x="1" y="9" width="11" height="1" fill="#8c8058"/>
<rect x="1" y="10" width="11" height="2" fill="#b8b4a2"/>
<rect x="13" y="3" width="1" height="9" fill="#cdbd8c"/>
</g></svg><svg style="position:absolute;left:267px;top:194px" width="15" height="13" viewBox="0 0 15 13"><g shape-rendering="crispEdges">
<rect x="0" y="0" width="4" height="1" fill="#000"/>
<rect x="0" y="0" width="1" height="12" fill="#000"/>
<rect x="4" y="1" width="9" height="1" fill="#000"/>
<rect x="12" y="1" width="1" height="12" fill="#000"/>
<rect x="13" y="2" width="2" height="1" fill="#000"/>
<rect x="14" y="2" width="1" height="10" fill="#000"/>
<rect x="1" y="12" width="13" height="1" fill="#000"/>
<rect x="1" y="1" width="3" height="1" fill="#b4d4e4"/>
<rect x="1" y="2" width="11" height="7" fill="url(#fg)"/>
<rect x="1" y="9" width="11" height="1" fill="#8c8058"/>
<rect x="1" y="10" width="11" height="2" fill="#b8b4a2"/>
<rect x="13" y="3" width="1" height="9" fill="#cdbd8c"/>
</g></svg><svg style="position:absolute;left:267px;top:213px" width="12" height="15" viewBox="0 0 12 15"><g shape-rendering="crispEdges">
<path d="M3 1 H11 V14 H1 V3 Z" fill="url(#fl)"/>
<rect x="3" y="0" width="9" height="1" fill="#000"/>
<rect x="11" y="0" width="1" height="15" fill="#000"/>
<rect x="0" y="14" width="12" height="1" fill="#000"/>
<rect x="0" y="3" width="1" height="12" fill="#000"/>
<rect x="1" y="2" width="1" height="1" fill="#000"/><rect x="2" y="1" width="1" height="1" fill="#000"/>
<rect x="3" y="1" width="1" height="3" fill="#b8b8b8"/><rect x="1" y="3" width="3" height="1" fill="#b8b8b8"/>
<rect x="2" y="2" width="1" height="1" fill="#f8f8f8"/>
</g></svg><svg style="position:absolute;left:267px;top:233px" width="12" height="15" viewBox="0 0 12 15"><g shape-rendering="crispEdges">
<path d="M3 1 H11 V14 H1 V3 Z" fill="url(#fl)"/>
<rect x="3" y="0" width="9" height="1" fill="#000"/>
<rect x="11" y="0" width="1" height="15" fill="#000"/>
<rect x="0" y="14" width="12" height="1" fill="#000"/>
<rect x="0" y="3" width="1" height="12" fill="#000"/>
<rect x="1" y="2" width="1" height="1" fill="#000"/><rect x="2" y="1" width="1" height="1" fill="#000"/>
<rect x="3" y="1" width="1" height="3" fill="#b8b8b8"/><rect x="1" y="3" width="3" height="1" fill="#b8b8b8"/>
<rect x="2" y="2" width="1" height="1" fill="#f8f8f8"/>
</g></svg><svg style="position:absolute;left:267px;top:253px" width="15" height="14" viewBox="0 0 15 14"><g shape-rendering="crispEdges">
<rect x="0" y="0" width="15" height="14" fill="#000"/>
<rect x="1" y="1" width="13" height="12" fill="#a4bcf0"/>
<rect x="1" y="1" width="13" height="1" fill="#e4ecff"/>
<rect x="3" y="2" width="9" height="3" fill="#404e80"/>
<rect x="4" y="3" width="2" height="1" fill="#fff"/><rect x="7" y="3" width="2" height="1" fill="#fff"/><rect x="10" y="3" width="2" height="1" fill="#fff"/>
<rect x="3" y="5" width="9" height="6" fill="#f6f6f6"/>
<rect x="3" y="7" width="9" height="1" fill="#c4c4c4"/><rect x="3" y="9" width="9" height="1" fill="#c4c4c4"/>
<rect x="1" y="12" width="13" height="1" fill="#c8d8ff"/>
</g></svg><svg style="position:absolute;left:267px;top:273px" width="12" height="15" viewBox="0 0 12 15"><g shape-rendering="crispEdges">
<path d="M3 1 H11 V14 H1 V3 Z" fill="url(#fl)"/>
<rect x="3" y="0" width="9" height="1" fill="#000"/>
<rect x="11" y="0" width="1" height="15" fill="#000"/>
<rect x="0" y="14" width="12" height="1" fill="#000"/>
<rect x="0" y="3" width="1" height="12" fill="#000"/>
<rect x="1" y="2" width="1" height="1" fill="#000"/><rect x="2" y="1" width="1" height="1" fill="#000"/>
<rect x="3" y="1" width="1" height="3" fill="#b8b8b8"/><rect x="1" y="3" width="3" height="1" fill="#b8b8b8"/>
<rect x="2" y="2" width="1" height="1" fill="#f8f8f8"/>
</g></svg><svg style="position:absolute;left:267px;top:294px" width="15" height="13" viewBox="0 0 15 13"><g shape-rendering="crispEdges">
<rect x="0" y="0" width="4" height="1" fill="#000"/>
<rect x="0" y="0" width="1" height="12" fill="#000"/>
<rect x="4" y="1" width="9" height="1" fill="#000"/>
<rect x="12" y="1" width="1" height="12" fill="#000"/>
<rect x="13" y="2" width="2" height="1" fill="#000"/>
<rect x="14" y="2" width="1" height="10" fill="#000"/>
<rect x="1" y="12" width="13" height="1" fill="#000"/>
<rect x="1" y="1" width="3" height="1" fill="#b4d4e4"/>
<rect x="1" y="2" width="11" height="7" fill="url(#fg)"/>
<rect x="1" y="9" width="11" height="1" fill="#8c8058"/>
<rect x="1" y="10" width="11" height="2" fill="#b8b4a2"/>
<rect x="13" y="3" width="1" height="9" fill="#cdbd8c"/>
</g></svg><svg style="position:absolute;left:267px;top:314px" width="15" height="13" viewBox="0 0 15 13"><g shape-rendering="crispEdges">
<rect x="0" y="0" width="4" height="1" fill="#000"/>
<rect x="0" y="0" width="1" height="12" fill="#000"/>
<rect x="4" y="1" width="9" height="1" fill="#000"/>
<rect x="12" y="1" width="1" height="12" fill="#000"/>
<rect x="13" y="2" width="2" height="1" fill="#000"/>
<rect x="14" y="2" width="1" height="10" fill="#000"/>
<rect x="1" y="12" width="13" height="1" fill="#000"/>
<rect x="1" y="1" width="3" height="1" fill="#b4d4e4"/>
<rect x="1" y="2" width="11" height="7" fill="url(#fg)"/>
<rect x="1" y="9" width="11" height="1" fill="#8c8058"/>
<rect x="1" y="10" width="11" height="2" fill="#b8b4a2"/>
<rect x="13" y="3" width="1" height="9" fill="#cdbd8c"/>
</g></svg><svg style="position:absolute;left:267px;top:333px" width="12" height="15" viewBox="0 0 12 15"><g shape-rendering="crispEdges">
<path d="M3 1 H11 V14 H1 V3 Z" fill="url(#fl)"/>
<rect x="3" y="0" width="9" height="1" fill="#000"/>
<rect x="11" y="0" width="1" height="15" fill="#000"/>
<rect x="0" y="14" width="12" height="1" fill="#000"/>
<rect x="0" y="3" width="1" height="12" fill="#000"/>
<rect x="1" y="2" width="1" height="1" fill="#000"/><rect x="2" y="1" width="1" height="1" fill="#000"/>
<rect x="3" y="1" width="1" height="3" fill="#b8b8b8"/><rect x="1" y="3" width="3" height="1" fill="#b8b8b8"/>
<rect x="2" y="2" width="1" height="1" fill="#f8f8f8"/>
</g></svg><svg style="position:absolute;left:267px;top:353px" width="12" height="15" viewBox="0 0 12 15"><g shape-rendering="crispEdges">
<path d="M3 1 H11 V14 H1 V3 Z" fill="url(#fl)"/>
<rect x="3" y="0" width="9" height="1" fill="#000"/>
<rect x="11" y="0" width="1" height="15" fill="#000"/>
<rect x="0" y="14" width="12" height="1" fill="#000"/>
<rect x="0" y="3" width="1" height="12" fill="#000"/>
<rect x="1" y="2" width="1" height="1" fill="#000"/><rect x="2" y="1" width="1" height="1" fill="#000"/>
<rect x="3" y="1" width="1" height="3" fill="#b8b8b8"/><rect x="1" y="3" width="3" height="1" fill="#b8b8b8"/>
<rect x="2" y="2" width="1" height="1" fill="#f8f8f8"/>
</g></svg><svg style="position:absolute;left:267px;top:374px" width="15" height="13" viewBox="0 0 15 13"><g shape-rendering="crispEdges">
<rect x="0" y="0" width="4" height="1" fill="#000"/>
<rect x="0" y="0" width="1" height="12" fill="#000"/>
<rect x="4" y="1" width="9" height="1" fill="#000"/>
<rect x="12" y="1" width="1" height="12" fill="#000"/>
<rect x="13" y="2" width="2" height="1" fill="#000"/>
<rect x="14" y="2" width="1" height="10" fill="#000"/>
<rect x="1" y="12" width="13" height="1" fill="#000"/>
<rect x="1" y="1" width="3" height="1" fill="#b4d4e4"/>
<rect x="1" y="2" width="11" height="7" fill="url(#fg)"/>
<rect x="1" y="9" width="11" height="1" fill="#8c8058"/>
<rect x="1" y="10" width="11" height="2" fill="#b8b4a2"/>
<rect x="13" y="3" width="1" height="9" fill="#cdbd8c"/>
</g></svg><svg style="position:absolute;left:267px;top:394px" width="15" height="13" viewBox="0 0 15 13"><g shape-rendering="crispEdges">
<rect x="0" y="0" width="4" height="1" fill="#000"/>
<rect x="0" y="0" width="1" height="12" fill="#000"/>
<rect x="4" y="1" width="9" height="1" fill="#000"/>
<rect x="12" y="1" width="1" height="12" fill="#000"/>
<rect x="13" y="2" width="2" height="1" fill="#000"/>
<rect x="14" y="2" width="1" height="10" fill="#000"/>
<rect x="1" y="12" width="13" height="1" fill="#000"/>
<rect x="1" y="1" width="3" height="1" fill="#b4d4e4"/>
<rect x="1" y="2" width="11" height="7" fill="url(#fg)"/>
<rect x="1" y="9" width="11" height="1" fill="#8c8058"/>
<rect x="1" y="10" width="11" height="2" fill="#b8b4a2"/>
<rect x="13" y="3" width="1" height="9" fill="#cdbd8c"/>
</g></svg><svg style="position:absolute;left:267px;top:413px" width="12" height="15" viewBox="0 0 12 15"><g shape-rendering="crispEdges">
<path d="M3 1 H11 V14 H1 V3 Z" fill="url(#fl)"/>
<rect x="3" y="0" width="9" height="1" fill="#000"/>
<rect x="11" y="0" width="1" height="15" fill="#000"/>
<rect x="0" y="14" width="12" height="1" fill="#000"/>
<rect x="0" y="3" width="1" height="12" fill="#000"/>
<rect x="1" y="2" width="1" height="1" fill="#000"/><rect x="2" y="1" width="1" height="1" fill="#000"/>
<rect x="3" y="1" width="1" height="3" fill="#b8b8b8"/><rect x="1" y="3" width="3" height="1" fill="#b8b8b8"/>
<rect x="2" y="2" width="1" height="1" fill="#f8f8f8"/>
</g></svg><svg style="position:absolute;left:267px;top:433px" width="12" height="15" viewBox="0 0 12 15"><g shape-rendering="crispEdges">
<path d="M3 1 H11 V14 H1 V3 Z" fill="url(#fl)"/>
<rect x="3" y="0" width="9" height="1" fill="#000"/>
<rect x="11" y="0" width="1" height="15" fill="#000"/>
<rect x="0" y="14" width="12" height="1" fill="#000"/>
<rect x="0" y="3" width="1" height="12" fill="#000"/>
<rect x="1" y="2" width="1" height="1" fill="#000"/><rect x="2" y="1" width="1" height="1" fill="#000"/>
<rect x="3" y="1" width="1" height="3" fill="#b8b8b8"/><rect x="1" y="3" width="3" height="1" fill="#b8b8b8"/>
<rect x="2" y="2" width="1" height="1" fill="#f8f8f8"/>
</g></svg><div style="left:852px;top:151px;width:1px;height:327px;background:#4a4a4a;"></div><div style="left:853px;top:151px;width:14px;height:327px;background:#b4b4b4;"></div><div style="left:853px;top:151px;width:14px;height:13px;background:linear-gradient(90deg,#e6e6e6,#d0d0d0);"></div><div style="left:853px;top:151px;width:1px;height:13px;background:#ffffff;"></div><div style="left:853px;top:151px;width:14px;height:1px;background:#ffffff;"></div><div style="left:866px;top:151px;width:1px;height:13px;background:#b0b0b0;"></div><svg style="position:absolute;left:853px;top:151px" width="14" height="13" viewBox="0 0 14 13"><path d="M3.0 7.0 L7.0 3.0 L11.0 7.0 H9.0 V9.5 H5.0 V7.0 Z" fill="#808080"/></svg><div style="left:853px;top:164px;width:14px;height:1px;background:#4a4a4a;"></div><div style="left:853px;top:165px;width:14px;height:86px;background:linear-gradient(90deg,#c8c8c8,#e8e8e8 75%,#c0c0c0);"></div><div style="left:853px;top:165px;width:1px;height:86px;background:#ffffff;"></div><div style="left:853px;top:165px;width:14px;height:1px;background:#ffffff;"></div><div style="left:853px;top:250px;width:14px;height:1px;background:#4a4a4a;"></div><div style="left:853px;top:463px;width:14px;height:1px;background:#4a4a4a;"></div><div style="left:853px;top:464px;width:14px;height:14px;background:linear-gradient(90deg,#e6e6e6,#d0d0d0);"></div><div style="left:853px;top:464px;width:1px;height:14px;background:#ffffff;"></div><div style="left:853px;top:464px;width:14px;height:1px;background:#ffffff;"></div><div style="left:866px;top:464px;width:1px;height:14px;background:#b0b0b0;"></div><div style="left:853px;top:477px;width:14px;height:1px;background:#b0b0b0;"></div><svg style="position:absolute;left:853px;top:464px" width="14" height="14" viewBox="0 0 14 14"><path d="M3.0 6.5 L7.0 10.5 L11.0 6.5 H9.0 V4.0 H5.0 V6.5 Z" fill="#222"/></svg><div style="left:265px;top:463px;width:587px;height:1px;background:#4a4a4a;"></div><div style="left:265px;top:464px;width:587px;height:14px;background:#b4b4b4;"></div><div style="left:265px;top:464px;width:14px;height:14px;background:linear-gradient(#e6e6e6,#d0d0d0);"></div><div style="left:265px;top:464px;width:1px;height:14px;background:#ffffff;"></div><div style="left:265px;top:464px;width:14px;height:1px;background:#ffffff;"></div><div style="left:278px;top:464px;width:1px;height:14px;background:#b0b0b0;"></div><div style="left:265px;top:477px;width:14px;height:1px;background:#b0b0b0;"></div><svg style="position:absolute;left:265px;top:464px" width="14" height="14" viewBox="0 0 14 14"><path d="M3.0 7.0 L7.5 2.5 V5.0 H10.0 V9.0 H7.5 V11.5 Z" fill="#888"/></svg><div style="left:278px;top:464px;width:1px;height:14px;background:#4a4a4a;"></div><div style="left:279px;top:464px;width:532px;height:14px;background:linear-gradient(#e8e8e8,#d0d0d0);"></div><div style="left:279px;top:464px;width:1px;height:14px;background:#ffffff;"></div><div style="left:279px;top:464px;width:532px;height:1px;background:#ffffff;"></div><div style="left:810px;top:464px;width:1px;height:14px;background:#4a4a4a;"></div><div style="left:839px;top:464px;width:13px;height:14px;background:linear-gradient(#e6e6e6,#d0d0d0);"></div><div style="left:839px;top:464px;width:1px;height:14px;background:#ffffff;"></div><div style="left:839px;top:464px;width:13px;height:1px;background:#ffffff;"></div><div style="left:851px;top:464px;width:1px;height:14px;background:#b0b0b0;"></div><div style="left:839px;top:477px;width:13px;height:1px;background:#b0b0b0;"></div><svg style="position:absolute;left:839px;top:464px" width="13" height="14" viewBox="0 0 13 14"><path d="M9.5 7.0 L5.0 2.5 V5.0 H2.5 V9.0 H5.0 V11.5 Z" fill="#222"/></svg><div style="left:838px;top:464px;width:1px;height:14px;background:#4a4a4a;"></div><div style="left:5px;top:483px;width:869px;height:1px;background:#4a4a4a;"></div><div style="left:6px;top:484px;width:867px;height:1px;background:#ffffff;"></div><div style="left:5px;top:483px;width:1px;height:25px;background:#4a4a4a;"></div><div style="left:6px;top:484px;width:1px;height:23px;background:#ffffff;"></div><div style="left:7px;top:485px;width:866px;height:22px;background:linear-gradient(#d4d4d4,#dadada);"></div><div style="left:873px;top:483px;width:1px;height:25px;background:#4a4a4a;"></div><div style="left:5px;top:507px;width:869px;height:1px;background:#a8a8a8;"></div><div style="left:693px;top:485px;width:1px;height:22px;background:#8a8a8a;"></div><div style="left:694px;top:485px;width:1px;height:22px;background:#ffffff;"></div><svg style="position:absolute;left:6px;top:484px" width="22" height="22" viewBox="0 0 22 22"><path d="M7 3.5 H10.5 L13.5 6.5 V15.5 L12.5 16.2 H6.5 L4.5 13 L3 10.5 L3.5 8.5 L5.5 8.3 L6.5 9.5 V4.5 Z" fill="#f8e0d4" stroke="#000" stroke-width="1.1"/>
<path d="M8.5 5 V10.5 M10.5 5.5 V10.5" stroke="#dcc0b0" stroke-width="0.9"/>
<rect x="10.5" y="7.5" width="8.5" height="5.2" fill="#86b28a" stroke="#000" stroke-width="1"/><rect x="11.5" y="9" width="6.5" height="2" fill="#a6cca6"/>
<rect x="6.5" y="16.8" width="7.5" height="2.8" fill="#fff" stroke="#000" stroke-width="1.2"/></svg><svg style="position:absolute;left:697px;top:486px" width="16" height="19" viewBox="0 0 16 19"><defs><radialGradient id="bulb" cx="0.45" cy="0.4" r="0.6"><stop offset="0" stop-color="#fff"/><stop offset="0.6" stop-color="#f4f0e0"/><stop offset="1" stop-color="#d8c890"/></radialGradient></defs>
<path d="M4.5 12.5 Q1.5 9.5 1.8 6 Q2.5 1.2 7.5 1 Q12.5 1.2 13.2 6 Q13.5 9.5 10.5 12.5 Z" fill="url(#bulb)" stroke="#000" stroke-width="1"/>
<path d="M5 12.5 H10 V16.5 Q7.5 18.5 5 16.5 Z" fill="#fff" stroke="#000" stroke-width="1.2"/><path d="M5 14.5 H10" stroke="#000" stroke-width="1"/></svg>
<div style="left:348.75px;top:6px;font:bold 11px 'Liberation Sans', sans-serif;line-height:14px;white-space:pre;color:#0a0a60;transform:scaleX(1.2500);transform-origin:0 0;-webkit-text-stroke:0.2px #0a0a60">Менеджер Файлов</div><div style="left:20.86px;top:30px;font:12px 'Liberation Sans', sans-serif;line-height:14px;white-space:pre;color:#000;transform:scaleX(1.1429);transform-origin:0 0">Файл</div><div style="left:79.87px;top:30px;font:12px 'Liberation Sans', sans-serif;line-height:14px;white-space:pre;color:#000;transform:scaleX(1.1282);transform-origin:0 0">Правка</div><div style="left:151.81px;top:30px;font:12px 'Liberation Sans', sans-serif;line-height:14px;white-space:pre;color:#000;transform:scaleX(1.1915);transform-origin:0 0">Переход</div><div style="left:235.86px;top:30px;font:12px 'Liberation Sans', sans-serif;line-height:14px;white-space:pre;color:#000;transform:scaleX(1.1400);transform-origin:0 0">Закладки</div><div style="left:330.89px;top:30px;font:12px 'Liberation Sans', sans-serif;line-height:14px;white-space:pre;color:#000;transform:scaleX(1.1111);transform-origin:0 0">Помощь</div><div style="left:20.87px;top:74px;font:11px 'Liberation Sans', sans-serif;line-height:14px;white-space:pre;color:#000;transform:scaleX(1.1333);transform-origin:0 0">Вверх</div><div style="left:73.00px;top:74px;font:11px 'Liberation Sans', sans-serif;line-height:14px;white-space:pre;color:#000;transform:scaleX(1.1020);transform-origin:0 0">Обновить</div><div style="left:143.00px;top:74px;font:11px 'Liberation Sans', sans-serif;line-height:14px;white-space:pre;color:#000;transform:scaleX(1.1212);transform-origin:0 0">Домой</div><div style="left:194.85px;top:74px;font:11px 'Liberation Sans', sans-serif;line-height:14px;white-space:pre;color:#000;transform:scaleX(1.1458);transform-origin:0 0">Вырезать</div><div style="left:265.84px;top:74px;font:11px 'Liberation Sans', sans-serif;line-height:14px;white-space:pre;color:#000;transform:scaleX(1.1552);transform-origin:0 0">Копировать</div><div style="left:349.87px;top:74px;font:11px 'Liberation Sans', sans-serif;line-height:14px;white-space:pre;color:#000;transform:scaleX(1.1333);transform-origin:0 0">Вставить</div><div style="left:417.84px;top:74px;font:11px 'Liberation Sans', sans-serif;line-height:14px;white-space:pre;color:#000;transform:scaleX(1.1562);transform-origin:0 0">Новый</div><div style="left:470.91px;top:74px;font:11px 'Liberation Sans', sans-serif;line-height:14px;white-space:pre;color:#000;transform:scaleX(1.0857);transform-origin:0 0">Печать</div><div style="left:526.00px;top:74px;font:11px 'Liberation Sans', sans-serif;line-height:14px;white-space:pre;color:#000;transform:scaleX(1.1250);transform-origin:0 0">Добавить</div><div style="left:594.85px;top:75px;font:11px 'Liberation Sans', sans-serif;line-height:14px;white-space:pre;color:#000;transform:scaleX(1.1522);transform-origin:0 0">Закладки</div><div style="left:20.88px;top:102px;font:11px 'Liberation Sans', sans-serif;line-height:14px;white-space:pre;color:#000;transform:scaleX(1.1154);transform-origin:0 0">Путь:</div><div style="left:65.00px;top:102px;font:11px 'Liberation Sans', sans-serif;line-height:14px;white-space:pre;color:#000;transform:scaleX(1.1176);transform-origin:0 0">/etc</div><div style="left:669.79px;top:102px;font:11px 'Liberation Sans', sans-serif;line-height:14px;white-space:pre;color:#000;transform:scaleX(1.2105);transform-origin:0 0">Фильтр:</div><div style="left:15.85px;top:134px;font:11px 'Liberation Sans', sans-serif;line-height:14px;white-space:pre;color:#000;transform:scaleX(1.1522);transform-origin:0 0">Закладки</div><div style="left:56.88px;top:172px;font:11px 'Liberation Sans', sans-serif;line-height:14px;white-space:pre;color:#000;transform:scaleX(1.1250);transform-origin:0 0">.boot</div><div style="left:56.85px;top:192px;font:11px 'Liberation Sans', sans-serif;line-height:14px;white-space:pre;color:#000;transform:scaleX(1.1538);transform-origin:0 0">bin</div><div style="left:58.00px;top:212px;font:11px 'Liberation Sans', sans-serif;line-height:14px;white-space:pre;color:#000;transform:scaleX(1.0556);transform-origin:0 0">dev</div><div style="left:58.00px;top:232px;font:11px 'Liberation Sans', sans-serif;line-height:14px;white-space:pre;color:#000;transform:scaleX(1.1429);transform-origin:0 0">etc</div><div style="left:69.81px;top:252px;font:11px 'Liberation Sans', sans-serif;line-height:14px;white-space:pre;color:#000;transform:scaleX(1.1875);transform-origin:0 0">3proxy</div><div style="left:71.00px;top:272px;font:11px 'Liberation Sans', sans-serif;line-height:14px;white-space:pre;color:#000;transform:scaleX(1.0488);transform-origin:0 0">OpenCL</div><div style="left:71.00px;top:292px;font:11px 'Liberation Sans', sans-serif;line-height:14px;white-space:pre;color:#000;transform:scaleX(1.1379);transform-origin:0 0">config</div><div style="left:71.00px;top:312px;font:11px 'Liberation Sans', sans-serif;line-height:14px;white-space:pre;color:#000;transform:scaleX(1.1515);transform-origin:0 0">default</div><div style="left:71.00px;top:332px;font:11px 'Liberation Sans', sans-serif;line-height:14px;white-space:pre;color:#000;transform:scaleX(1.1364);transform-origin:0 0">elvis</div><div style="left:71.00px;top:352px;font:11px 'Liberation Sans', sans-serif;line-height:14px;white-space:pre;color:#000;transform:scaleX(1.1250);transform-origin:0 0">fonts</div><div style="left:71.00px;top:372px;font:11px 'Liberation Sans', sans-serif;line-height:14px;white-space:pre;color:#000;transform:scaleX(1.1190);transform-origin:0 0">openmpi</div><div style="left:71.00px;top:392px;font:11px 'Liberation Sans', sans-serif;line-height:14px;white-space:pre;color:#000;transform:scaleX(1.1622);transform-origin:0 0">openssl</div><div style="left:69.84px;top:412px;font:11px 'Liberation Sans', sans-serif;line-height:14px;white-space:pre;color:#000;transform:scaleX(1.1562);transform-origin:0 0">photon</div><div style="left:69.81px;top:432px;font:11px 'Liberation Sans', sans-serif;line-height:14px;white-space:pre;color:#000;transform:scaleX(1.1944);transform-origin:0 0">printers</div><div style="left:69.82px;top:452px;font:11px 'Liberation Sans', sans-serif;line-height:14px;white-space:pre;color:#000;transform:scaleX(1.1765);transform-origin:0 0">rc.d</div><div style="left:282.91px;top:134px;font:11px 'Liberation Sans', sans-serif;line-height:14px;white-space:pre;color:#000;transform:scaleX(1.0877);transform-origin:0 0">Имя файла</div><div style="left:400.92px;top:134px;font:11px 'Liberation Sans', sans-serif;line-height:14px;white-space:pre;color:#000;transform:scaleX(1.0833);transform-origin:0 0;width:29.62px;overflow:hidden">Размер</div><div style="left:451.00px;top:134px;font:11px 'Liberation Sans', sans-serif;line-height:14px;white-space:pre;color:#000;transform:scaleX(1.0833);transform-origin:0 0">Дата</div><div style="left:555.90px;top:134px;font:11px 'Liberation Sans', sans-serif;line-height:14px;white-space:pre;color:#000;transform:scaleX(1.0968);transform-origin:0 0;width:32.00px;overflow:hidden">Владелец</div><div style="left:608.78px;top:134px;font:11px 'Liberation Sans', sans-serif;line-height:14px;white-space:pre;color:#000;transform:scaleX(1.2222);transform-origin:0 0;width:29.64px;overflow:hidden">Группа</div><div style="left:661.87px;top:134px;font:11px 'Liberation Sans', sans-serif;line-height:14px;white-space:pre;color:#000;transform:scaleX(1.1346);transform-origin:0 0;width:51.24px;overflow:hidden">Права доступа</div><div style="left:735.87px;top:134px;font:11px 'Liberation Sans', sans-serif;line-height:14px;white-space:pre;color:#000;transform:scaleX(1.1316);transform-origin:0 0">Ссылка</div><div style="left:283.95px;top:153px;font:11px 'Liberation Sans', sans-serif;line-height:14px;white-space:pre;color:#fff;transform:scaleX(1.0500);transform-origin:0 0">..</div><div style="left:283.81px;top:173px;font:11px 'Liberation Sans', sans-serif;line-height:14px;white-space:pre;color:#000;transform:scaleX(1.1875);transform-origin:0 0">3proxy</div><div style="left:407.04px;top:173px;font:11px 'Liberation Sans', sans-serif;line-height:14px;white-space:pre;color:#000;transform:scaleX(1.0700);transform-origin:0 0">1,024</div><div style="left:447.00px;top:173px;font:11px 'Liberation Sans', sans-serif;line-height:14px;white-space:pre;color:#000;transform:scaleX(1.1176);transform-origin:0 0">05.10.2021 11:33</div><div style="left:546.80px;top:173px;font:11px 'Liberation Sans', sans-serif;line-height:14px;white-space:pre;color:#000;transform:scaleX(1.2000);transform-origin:0 0">root</div><div style="left:599.80px;top:173px;font:11px 'Liberation Sans', sans-serif;line-height:14px;white-space:pre;color:#000;transform:scaleX(1.2000);transform-origin:0 0">root</div><div style="left:652.71px;top:173px;font:11px 'Liberation Sans', sans-serif;line-height:14px;white-space:pre;color:#000;transform:scaleX(1.2917);transform-origin:0 0">rwx r-x r-x</div><div style="left:285.00px;top:193px;font:11px 'Liberation Sans', sans-serif;line-height:14px;white-space:pre;color:#000;transform:scaleX(1.0488);transform-origin:0 0">OpenCL</div><div style="left:407.04px;top:193px;font:11px 'Liberation Sans', sans-serif;line-height:14px;white-space:pre;color:#000;transform:scaleX(1.0700);transform-origin:0 0">1,024</div><div style="left:447.00px;top:193px;font:11px 'Liberation Sans', sans-serif;line-height:14px;white-space:pre;color:#000;transform:scaleX(1.1176);transform-origin:0 0">24.08.2021 13:05</div><div style="left:546.80px;top:193px;font:11px 'Liberation Sans', sans-serif;line-height:14px;white-space:pre;color:#000;transform:scaleX(1.2000);transform-origin:0 0">root</div><div style="left:599.80px;top:193px;font:11px 'Liberation Sans', sans-serif;line-height:14px;white-space:pre;color:#000;transform:scaleX(1.2000);transform-origin:0 0">root</div><div style="left:652.71px;top:193px;font:11px 'Liberation Sans', sans-serif;line-height:14px;white-space:pre;color:#000;transform:scaleX(1.2917);transform-origin:0 0">rwx r-x r-x</div><div style="left:282.00px;top:213px;font:11px 'Liberation Sans', sans-serif;line-height:14px;white-space:pre;color:#000;transform:scaleX(1.0000);transform-origin:0 0">TIMEZONE</div><div style="left:430.58px;top:213px;font:11px 'Liberation Sans', sans-serif;line-height:14px;white-space:pre;color:#000;transform:scaleX(1.0700);transform-origin:0 0">7</div><div style="left:447.00px;top:213px;font:11px 'Liberation Sans', sans-serif;line-height:14px;white-space:pre;color:#000;transform:scaleX(1.1176);transform-origin:0 0">05.10.2021 11:33</div><div style="left:546.80px;top:213px;font:11px 'Liberation Sans', sans-serif;line-height:14px;white-space:pre;color:#000;transform:scaleX(1.2000);transform-origin:0 0">root</div><div style="left:599.80px;top:213px;font:11px 'Liberation Sans', sans-serif;line-height:14px;white-space:pre;color:#000;transform:scaleX(1.2000);transform-origin:0 0">root</div><div style="left:652.67px;top:213px;font:11px 'Liberation Sans', sans-serif;line-height:14px;white-space:pre;color:#000;transform:scaleX(1.3333);transform-origin:0 0">rw- r-- r--</div><div style="left:282.00px;top:233px;font:11px 'Liberation Sans', sans-serif;line-height:14px;white-space:pre;color:#000;transform:scaleX(1.1935);transform-origin:0 0">appfilter.conf</div><div style="left:418.81px;top:233px;font:11px 'Liberation Sans', sans-serif;line-height:14px;white-space:pre;color:#000;transform:scaleX(1.0700);transform-origin:0 0">311</div><div style="left:447.00px;top:233px;font:11px 'Liberation Sans', sans-serif;line-height:14px;white-space:pre;color:#000;transform:scaleX(1.1176);transform-origin:0 0">05.10.2021 11:33</div><div style="left:546.80px;top:233px;font:11px 'Liberation Sans', sans-serif;line-height:14px;white-space:pre;color:#000;transform:scaleX(1.2000);transform-origin:0 0">root</div><div style="left:599.80px;top:233px;font:11px 'Liberation Sans', sans-serif;line-height:14px;white-space:pre;color:#000;transform:scaleX(1.2000);transform-origin:0 0">root</div><div style="left:652.67px;top:233px;font:11px 'Liberation Sans', sans-serif;line-height:14px;white-space:pre;color:#000;transform:scaleX(1.3333);transform-origin:0 0">rw- r-- r--</div><div style="left:286.00px;top:253px;font:11px 'Liberation Sans', sans-serif;line-height:14px;white-space:pre;color:#000;transform:scaleX(1.1667);transform-origin:0 0">autoconnect</div><div style="left:417.74px;top:253px;font:11px 'Liberation Sans', sans-serif;line-height:14px;white-space:pre;color:#000;transform:scaleX(1.0700);transform-origin:0 0">120</div><div style="left:447.00px;top:253px;font:11px 'Liberation Sans', sans-serif;line-height:14px;white-space:pre;color:#000;transform:scaleX(1.1176);transform-origin:0 0">05.10.2021 11:33</div><div style="left:546.80px;top:253px;font:11px 'Liberation Sans', sans-serif;line-height:14px;white-space:pre;color:#000;transform:scaleX(1.2000);transform-origin:0 0">root</div><div style="left:599.80px;top:253px;font:11px 'Liberation Sans', sans-serif;line-height:14px;white-space:pre;color:#000;transform:scaleX(1.2000);transform-origin:0 0">root</div><div style="left:652.71px;top:253px;font:11px 'Liberation Sans', sans-serif;line-height:14px;white-space:pre;color:#000;transform:scaleX(1.2917);transform-origin:0 0">rwx r-x r-x</div><div style="left:280.86px;top:273px;font:11px 'Liberation Sans', sans-serif;line-height:14px;white-space:pre;color:#000;transform:scaleX(1.1429);transform-origin:0 0">bootptab</div><div style="left:408.11px;top:273px;font:11px 'Liberation Sans', sans-serif;line-height:14px;white-space:pre;color:#000;transform:scaleX(1.0700);transform-origin:0 0">2,086</div><div style="left:447.00px;top:273px;font:11px 'Liberation Sans', sans-serif;line-height:14px;white-space:pre;color:#000;transform:scaleX(1.1176);transform-origin:0 0">05.10.2021 11:33</div><div style="left:546.80px;top:273px;font:11px 'Liberation Sans', sans-serif;line-height:14px;white-space:pre;color:#000;transform:scaleX(1.2000);transform-origin:0 0">root</div><div style="left:599.80px;top:273px;font:11px 'Liberation Sans', sans-serif;line-height:14px;white-space:pre;color:#000;transform:scaleX(1.2000);transform-origin:0 0">root</div><div style="left:652.67px;top:273px;font:11px 'Liberation Sans', sans-serif;line-height:14px;white-space:pre;color:#000;transform:scaleX(1.3333);transform-origin:0 0">rw- r-- r--</div><div style="left:285.00px;top:293px;font:11px 'Liberation Sans', sans-serif;line-height:14px;white-space:pre;color:#000;transform:scaleX(1.1379);transform-origin:0 0">config</div><div style="left:407.04px;top:293px;font:11px 'Liberation Sans', sans-serif;line-height:14px;white-space:pre;color:#000;transform:scaleX(1.0700);transform-origin:0 0">1,024</div><div style="left:447.00px;top:293px;font:11px 'Liberation Sans', sans-serif;line-height:14px;white-space:pre;color:#000;transform:scaleX(1.1176);transform-origin:0 0">05.10.2021 11:33</div><div style="left:546.80px;top:293px;font:11px 'Liberation Sans', sans-serif;line-height:14px;white-space:pre;color:#000;transform:scaleX(1.2000);transform-origin:0 0">root</div><div style="left:599.80px;top:293px;font:11px 'Liberation Sans', sans-serif;line-height:14px;white-space:pre;color:#000;transform:scaleX(1.2000);transform-origin:0 0">root</div><div style="left:652.71px;top:293px;font:11px 'Liberation Sans', sans-serif;line-height:14px;white-space:pre;color:#000;transform:scaleX(1.2917);transform-origin:0 0">rwx r-x r-x</div><div style="left:285.00px;top:313px;font:11px 'Liberation Sans', sans-serif;line-height:14px;white-space:pre;color:#000;transform:scaleX(1.1515);transform-origin:0 0">default</div><div style="left:407.04px;top:313px;font:11px 'Liberation Sans', sans-serif;line-height:14px;white-space:pre;color:#000;transform:scaleX(1.0700);transform-origin:0 0">1,024</div><div style="left:447.00px;top:313px;font:11px 'Liberation Sans', sans-serif;line-height:14px;white-space:pre;color:#000;transform:scaleX(1.1176);transform-origin:0 0">05.10.2021 11:33</div><div style="left:546.80px;top:313px;font:11px 'Liberation Sans', sans-serif;line-height:14px;white-space:pre;color:#000;transform:scaleX(1.2000);transform-origin:0 0">root</div><div style="left:599.80px;top:313px;font:11px 'Liberation Sans', sans-serif;line-height:14px;white-space:pre;color:#000;transform:scaleX(1.2000);transform-origin:0 0">root</div><div style="left:652.71px;top:313px;font:11px 'Liberation Sans', sans-serif;line-height:14px;white-space:pre;color:#000;transform:scaleX(1.2917);transform-origin:0 0">rwx r-x r-x</div><div style="left:282.00px;top:333px;font:11px 'Liberation Sans', sans-serif;line-height:14px;white-space:pre;color:#000;transform:scaleX(1.1512);transform-origin:0 0">dhcpd-dhcpv6.c...</div><div style="left:408.11px;top:333px;font:11px 'Liberation Sans', sans-serif;line-height:14px;white-space:pre;color:#000;transform:scaleX(1.0700);transform-origin:0 0">3,123</div><div style="left:447.00px;top:333px;font:11px 'Liberation Sans', sans-serif;line-height:14px;white-space:pre;color:#000;transform:scaleX(1.1176);transform-origin:0 0">05.10.2021 11:33</div><div style="left:546.80px;top:333px;font:11px 'Liberation Sans', sans-serif;line-height:14px;white-space:pre;color:#000;transform:scaleX(1.2000);transform-origin:0 0">root</div><div style="left:599.80px;top:333px;font:11px 'Liberation Sans', sans-serif;line-height:14px;white-space:pre;color:#000;transform:scaleX(1.2000);transform-origin:0 0">root</div><div style="left:652.67px;top:333px;font:11px 'Liberation Sans', sans-serif;line-height:14px;white-space:pre;color:#000;transform:scaleX(1.3333);transform-origin:0 0">rw- r-- r--</div><div style="left:282.00px;top:353px;font:11px 'Liberation Sans', sans-serif;line-height:14px;white-space:pre;color:#000;transform:scaleX(1.1481);transform-origin:0 0">dhcpd.conf</div><div style="left:408.11px;top:353px;font:11px 'Liberation Sans', sans-serif;line-height:14px;white-space:pre;color:#000;transform:scaleX(1.0700);transform-origin:0 0">3,266</div><div style="left:447.00px;top:353px;font:11px 'Liberation Sans', sans-serif;line-height:14px;white-space:pre;color:#000;transform:scaleX(1.1176);transform-origin:0 0">05.10.2021 11:33</div><div style="left:546.80px;top:353px;font:11px 'Liberation Sans', sans-serif;line-height:14px;white-space:pre;color:#000;transform:scaleX(1.2000);transform-origin:0 0">root</div><div style="left:599.80px;top:353px;font:11px 'Liberation Sans', sans-serif;line-height:14px;white-space:pre;color:#000;transform:scaleX(1.2000);transform-origin:0 0">root</div><div style="left:652.67px;top:353px;font:11px 'Liberation Sans', sans-serif;line-height:14px;white-space:pre;color:#000;transform:scaleX(1.3333);transform-origin:0 0">rw- r-- r--</div><div style="left:285.00px;top:373px;font:11px 'Liberation Sans', sans-serif;line-height:14px;white-space:pre;color:#000;transform:scaleX(1.1364);transform-origin:0 0">elvis</div><div style="left:407.04px;top:373px;font:11px 'Liberation Sans', sans-serif;line-height:14px;white-space:pre;color:#000;transform:scaleX(1.0700);transform-origin:0 0">1,024</div><div style="left:447.00px;top:373px;font:11px 'Liberation Sans', sans-serif;line-height:14px;white-space:pre;color:#000;transform:scaleX(1.1176);transform-origin:0 0">05.10.2021 11:33</div><div style="left:546.80px;top:373px;font:11px 'Liberation Sans', sans-serif;line-height:14px;white-space:pre;color:#000;transform:scaleX(1.2000);transform-origin:0 0">root</div><div style="left:599.80px;top:373px;font:11px 'Liberation Sans', sans-serif;line-height:14px;white-space:pre;color:#000;transform:scaleX(1.2000);transform-origin:0 0">root</div><div style="left:652.71px;top:373px;font:11px 'Liberation Sans', sans-serif;line-height:14px;white-space:pre;color:#000;transform:scaleX(1.2917);transform-origin:0 0">rwx r-x r-x</div><div style="left:285.00px;top:393px;font:11px 'Liberation Sans', sans-serif;line-height:14px;white-space:pre;color:#000;transform:scaleX(1.1250);transform-origin:0 0">fonts</div><div style="left:407.04px;top:393px;font:11px 'Liberation Sans', sans-serif;line-height:14px;white-space:pre;color:#000;transform:scaleX(1.0700);transform-origin:0 0">1,024</div><div style="left:447.00px;top:393px;font:11px 'Liberation Sans', sans-serif;line-height:14px;white-space:pre;color:#000;transform:scaleX(1.1176);transform-origin:0 0">05.10.2021 11:33</div><div style="left:546.80px;top:393px;font:11px 'Liberation Sans', sans-serif;line-height:14px;white-space:pre;color:#000;transform:scaleX(1.2000);transform-origin:0 0">root</div><div style="left:599.80px;top:393px;font:11px 'Liberation Sans', sans-serif;line-height:14px;white-space:pre;color:#000;transform:scaleX(1.2000);transform-origin:0 0">root</div><div style="left:652.71px;top:393px;font:11px 'Liberation Sans', sans-serif;line-height:14px;white-space:pre;color:#000;transform:scaleX(1.2917);transform-origin:0 0">rwx r-x r-x</div><div style="left:282.00px;top:413px;font:11px 'Liberation Sans', sans-serif;line-height:14px;white-space:pre;color:#000;transform:scaleX(1.1860);transform-origin:0 0">ftpchroot</div><div style="left:417.74px;top:413px;font:11px 'Liberation Sans', sans-serif;line-height:14px;white-space:pre;color:#000;transform:scaleX(1.0700);transform-origin:0 0">140</div><div style="left:447.00px;top:413px;font:11px 'Liberation Sans', sans-serif;line-height:14px;white-space:pre;color:#000;transform:scaleX(1.1176);transform-origin:0 0">05.10.2021 11:33</div><div style="left:546.80px;top:413px;font:11px 'Liberation Sans', sans-serif;line-height:14px;white-space:pre;color:#000;transform:scaleX(1.2000);transform-origin:0 0">root</div><div style="left:599.80px;top:413px;font:11px 'Liberation Sans', sans-serif;line-height:14px;white-space:pre;color:#000;transform:scaleX(1.2000);transform-origin:0 0">root</div><div style="left:652.67px;top:413px;font:11px 'Liberation Sans', sans-serif;line-height:14px;white-space:pre;color:#000;transform:scaleX(1.3333);transform-origin:0 0">rw- r-- r--</div><div style="left:282.00px;top:433px;font:11px 'Liberation Sans', sans-serif;line-height:14px;white-space:pre;color:#000;transform:scaleX(1.1795);transform-origin:0 0">ftpusers</div><div style="left:417.74px;top:433px;font:11px 'Liberation Sans', sans-serif;line-height:14px;white-space:pre;color:#000;transform:scaleX(1.0700);transform-origin:0 0">402</div><div style="left:447.00px;top:433px;font:11px 'Liberation Sans', sans-serif;line-height:14px;white-space:pre;color:#000;transform:scaleX(1.1176);transform-origin:0 0">05.10.2021 08:28</div><div style="left:546.92px;top:433px;font:11px 'Liberation Sans', sans-serif;line-height:14px;white-space:pre;color:#000;transform:scaleX(1.0800);transform-origin:0 0">10000</div><div style="left:599.92px;top:433px;font:11px 'Liberation Sans', sans-serif;line-height:14px;white-space:pre;color:#000;transform:scaleX(1.0800);transform-origin:0 0">10000</div><div style="left:652.78px;top:433px;font:11px 'Liberation Sans', sans-serif;line-height:14px;white-space:pre;color:#000;transform:scaleX(1.2174);transform-origin:0 0">rw- rw- r--</div><div style="left:714.85px;top:489px;font:11px 'Liberation Sans', sans-serif;line-height:14px;white-space:pre;color:#000;transform:scaleX(1.1474);transform-origin:0 0">51 объект, 228.1КБ</div>
</body></html>
